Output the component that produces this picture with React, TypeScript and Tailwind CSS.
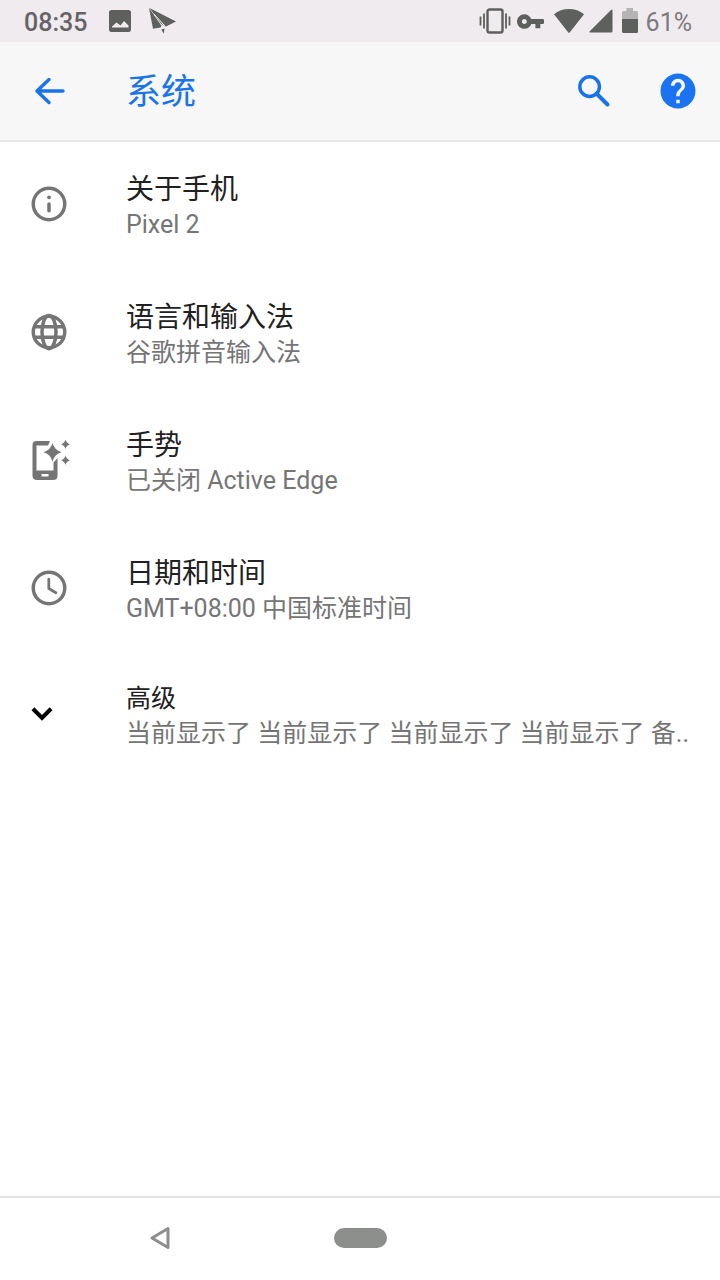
import React from "react";

type IconProps = { className?: string };

const ImageIcon: React.FC<IconProps> = ({ className }) => (
  <svg viewBox="0 0 22 22" className={className} fill="currentColor" aria-hidden="true">
    <path
      fillRule="evenodd"
      d="M2.500 0h17A2.500 2.500 0 0 1 22 2.500v17a2.500 2.500 0 0 1-2.500 2.500h-17A2.500 2.500 0 0 1 0 19.500v-17A2.500 2.500 0 0 1 2.500 0ZM3 17.500h16.500v-2L15 11l-3.500 4.500-4-3L3 16.500Z"
    />
  </svg>
);

const PaperPlane: React.FC<IconProps> = ({ className }) => (
  <svg viewBox="0 0 27 26" className={className} fill="currentColor" aria-hidden="true">
    <path d="M0 0 12.500 17.800 11.500 19.500 4 20.800Z" />
    <path d="M.5 0 27 13.500 16.500 18.700 12 15.500Z" />
    <path d="m12.300 21.500 3.200-1-.6 5.300Z" />
    <path d="m5 6 11.500 12.700" fill="none" stroke="#f0ebef" />
  </svg>
);

const VibrateIcon: React.FC<IconProps> = ({ className }) => (
  <svg viewBox="0 0 32 26" className={className} fill="none" stroke="currentColor" aria-hidden="true">
    <rect x="8.500" y="1.500" width="15" height="23" rx="2" strokeWidth="2.400" />
    <path d="M1.500 8.500v9M5 5.500v15M27 5.500v15M30.500 8.500v9" strokeWidth="1.800" />
  </svg>
);

const KeyIcon: React.FC<IconProps> = ({ className }) => (
  <svg viewBox="1 6 22 12" className={className} fill="currentColor" aria-hidden="true">
    <path d="M12.650 10C11.830 7.670 9.610 6 7 6c-3.310 0-6 2.690-6 6s2.690 6 6 6c2.610 0 4.830-1.670 5.650-4H16v3.500h4V14h2q1 0 1-1v-2q0-1-1-1H12.650zM7 14c-1.100 0-2-.9-2-2s.9-2 2-2 2 .9 2 2-.9 2-2 2z" />
  </svg>
);

const WifiIcon: React.FC<IconProps> = ({ className }) => (
  <svg viewBox="0 0 30 24" className={className} fill="currentColor" aria-hidden="true">
    <path d="M0 5.300C4 1.800 9.300 0 15 0s11 1.800 15 5.300L15.700 23.400q-.7.900-1.400 0Z" />
  </svg>
);

const SignalIcon: React.FC<IconProps> = ({ className }) => (
  <svg viewBox="0 0 24 24" className={className} fill="currentColor" aria-hidden="true">
    <path d="M1 22 22 1q1.500-1.300 1.500.5V22q0 1.500-1.500 1.500H1.500Q-.3 23.500 1 22Z" />
  </svg>
);

const BatteryIcon: React.FC<IconProps> = ({ className }) => (
  <svg viewBox="0 0 16 26" className={className} fill="currentColor" aria-hidden="true">
    <path d="M0 11V4.500Q0 3 1.500 3H4.500V0h6.500v3h3.500q1.500 0 1.500 1.500V11Z" opacity=".4" />
    <path d="M0 11h16v12.500q0 1.500-1.500 1.500h-13Q0 25 0 23.500Z" />
  </svg>
);

const BackArrow: React.FC<IconProps> = ({ className }) => (
  <svg
    viewBox="0 0 42 42"
    className={className}
    fill="none"
    stroke="currentColor"
    strokeWidth="3.400"
    strokeLinecap="round"
    strokeLinejoin="round"
    aria-hidden="true"
  >
    <path d="M35 21H9M21 9.500 9 21l12 11.500" />
  </svg>
);

const SearchIcon: React.FC<IconProps> = ({ className }) => (
  <svg viewBox="0 0 24 24" className={className} fill="none" stroke="currentColor" strokeWidth="2" aria-hidden="true">
    <circle cx="9.500" cy="9.500" r="5.600" />
    <path d="m13.700 13.700 6 6" strokeWidth="2.300" strokeLinecap="round" />
  </svg>
);

const HelpIcon: React.FC<IconProps> = ({ className }) => (
  <svg viewBox="0 0 24 24" className={className} fill="currentColor" aria-hidden="true">
    <path d="M12 2C6.480 2 2 6.480 2 12s4.480 10 10 10 10-4.480 10-10S17.520 2 12 2zm1 17h-2v-2h2v2zm2.070-7.750-.9.920C13.450 12.900 13 13.500 13 15h-2v-.5c0-1.100.450-2.100 1.170-2.830l1.240-1.260c.370-.360.590-.860.590-1.410 0-1.100-.9-2-2-2s-2 .9-2 2H8c0-2.210 1.790-4 4-4s4 1.790 4 4c0 .880-.360 1.680-.930 2.250z" />
  </svg>
);

const InfoIcon: React.FC<IconProps> = ({ className }) => (
  <svg viewBox="0 0 24 24" className={className} fill="none" stroke="currentColor" strokeWidth="2" aria-hidden="true">
    <circle cx="12" cy="12" r="9" />
    <path d="M12 12v3.800" strokeLinecap="round" />
    <circle cx="12" cy="8.200" r="1.100" fill="currentColor" stroke="none" />
  </svg>
);

const GlobeIcon: React.FC<IconProps> = ({ className }) => (
  <svg viewBox="0 0 24 24" className={className} fill="none" stroke="currentColor" strokeWidth="2" aria-hidden="true">
    <circle cx="12" cy="12" r="9" />
    <ellipse cx="12" cy="12" rx="4" ry="9.500" />
    <path d="M3.500 9h17M3.500 15h17" />
  </svg>
);

const GestureIcon: React.FC<IconProps> = ({ className }) => (
  <svg viewBox="0 0 42 42" className={className} fill="currentColor" aria-hidden="true">
    <path
      fillRule="evenodd"
      d="M8.500 2H22l-2 4.500H8.500v25h17V23.500l4-4.500V36.500q0 4.500-4.500 4.500H9q-4.500 0-4.500-4.500V6Q4.500 2 8.500 2ZM13.500 35v2.500h7V35Z"
    />
    <path d="M24.500 4Q26.500 11.200 33.500 13.200 26.500 15.200 24.500 22.500 22.500 15.200 15.500 13.200 22.500 11.200 24.500 4Z" />
    <path d="M37.500.5Q38.500 4.200 42 5.200 38.500 6.200 37.500 10 36.500 6.200 33 5.200 36.500 4.200 37.500.5Z" />
    <path d="M37.500 16.500Q38.500 20.200 42 21.200 38.500 22.200 37.500 26 36.500 22.200 33 21.200 36.500 20.200 37.500 16.500Z" />
  </svg>
);

const ClockIcon: React.FC<IconProps> = ({ className }) => (
  <svg viewBox="0 0 24 24" className={className} fill="none" stroke="currentColor" strokeWidth="2" aria-hidden="true">
    <circle cx="12" cy="12" r="9" />
    <path d="M11.900 7v5.300l4 2.400" strokeWidth="1.600" strokeLinecap="round" />
  </svg>
);

const ChevronDown: React.FC<IconProps> = ({ className }) => (
  <svg viewBox="0 0 24 24" className={className} fill="currentColor" aria-hidden="true">
    <path d="M7.600 8.200 12 12.600l4.400-4.400L18 9.800l-6 6-6-6 1.600-1.600z" />
  </svg>
);

const BackTriangle: React.FC<IconProps> = ({ className }) => (
  <svg
    viewBox="0 0 20 24"
    className={className}
    fill="none"
    stroke="currentColor"
    strokeWidth="3"
    strokeLinejoin="round"
    aria-hidden="true"
  >
    <path d="M18 2.500v19L2 12Z" />
  </svg>
);

const items = [
  { icon: InfoIcon, title: "关于手机", summary: "Pixel 2" },
  { icon: GlobeIcon, title: "语言和输入法", summary: "谷歌拼音输入法" },
  { icon: GestureIcon, title: "手势", summary: "已关闭 Active Edge" },
  { icon: ClockIcon, title: "日期和时间", summary: "GMT+08:00 中国标准时间" },
];

const StatusBar: React.FC = () => (
  <div className="flex h-[42px] items-center justify-between bg-[#f0ebef] px-6 pr-7 text-[#5d605d]">
    <div className="flex items-center">
      <span className="pt-1 text-[25px] font-medium leading-8 text-[#666366]">08:35</span>
      <ImageIcon className="ml-[22px] h-[22px] w-[22px]" />
      <PaperPlane className="ml-[18px] h-[26px] w-[27px]" />
    </div>
    <div className="flex items-center">
      <VibrateIcon className="h-[26px] w-8" />
      <KeyIcon className="ml-1.5 h-[15px] w-[27px]" />
      <WifiIcon className="ml-2.5 h-6 w-[30px]" />
      <SignalIcon className="ml-[5px] h-6 w-6" />
      <BatteryIcon className="ml-[9px] h-[26px] w-4" />
      <span className="ml-2 pt-1 text-[25px] leading-8 text-[#7d797c]">61%</span>
    </div>
  </div>
);

const AppBar: React.FC = () => (
  <header className="flex h-[98px] items-center bg-[#f7f7f7] pl-7 pr-[21px] text-[#1a73e8] shadow-[0_2px_0_#e9e9e9]">
    <button type="button" aria-label="返回" className="w-[98px]">
      <BackArrow className="h-[42px] w-[42px]" />
    </button>
    <h1 className="flex-1 pt-1 text-[35px] leading-[42px]">系统</h1>
    <button type="button" aria-label="搜索">
      <SearchIcon className="h-[42px] w-[42px]" />
    </button>
    <button type="button" aria-label="帮助" className="ml-[42px] text-[#1a73f0]">
      <HelpIcon className="h-[42px] w-[42px]" />
    </button>
  </header>
);

const App: React.FC = () => {
  return (
    <div className="flex min-h-screen flex-col bg-white font-[Roboto,'Noto_Sans_CJK_SC',sans-serif]">
      <StatusBar />
      <AppBar />

      <main className="flex-1">
        <ul>
          {items.map(({ icon: Icon, title, summary }) => (
            <li key={title}>
              <button type="button" className="flex h-32 w-full items-center px-7 text-left">
                <span className="w-[98px] shrink-0 text-[#757575]">
                  <Icon className="h-[42px] w-[42px]" />
                </span>
                <span className="min-w-0 flex-1 pt-1.5">
                  <span className="block text-[28px] leading-9 text-[#212121]">{title}</span>
                  <span className="block truncate text-[25px] leading-[34px] text-[#757575]">{summary}</span>
                </span>
              </button>
            </li>
          ))}
          <li>
            <button type="button" className="flex h-[124px] w-full items-center pl-[21px] pr-7 text-left">
              <span className="w-[105px] shrink-0 text-black">
                <ChevronDown className="h-[42px] w-[42px]" />
              </span>
              <span className="min-w-0 flex-1 pt-1">
                <span className="block text-[25px] leading-9 text-[#212121]">高级</span>
                <span className="block truncate text-[25px] leading-[34px] text-[#757575]">
                  当前显示了 当前显示了 当前显示了 当前显示了 备..
                </span>
              </span>
            </button>
          </li>
        </ul>
      </main>

      {/* System navigation */}
      <nav className="grid h-[84px] grid-cols-[1fr_auto_1fr] items-center border-t-2 border-[#e3e3e3] pb-0.5 text-[#8c8e8c]">
        <button type="button" aria-label="返回" className="mr-3.5 justify-self-center">
          <BackTriangle className="h-6 w-5" />
        </button>
        <button type="button" aria-label="主屏幕" className="h-5 w-[53px] rounded-full bg-[#8c8e8c]" />
      </nav>
    </div>
  );
};

export default App;
